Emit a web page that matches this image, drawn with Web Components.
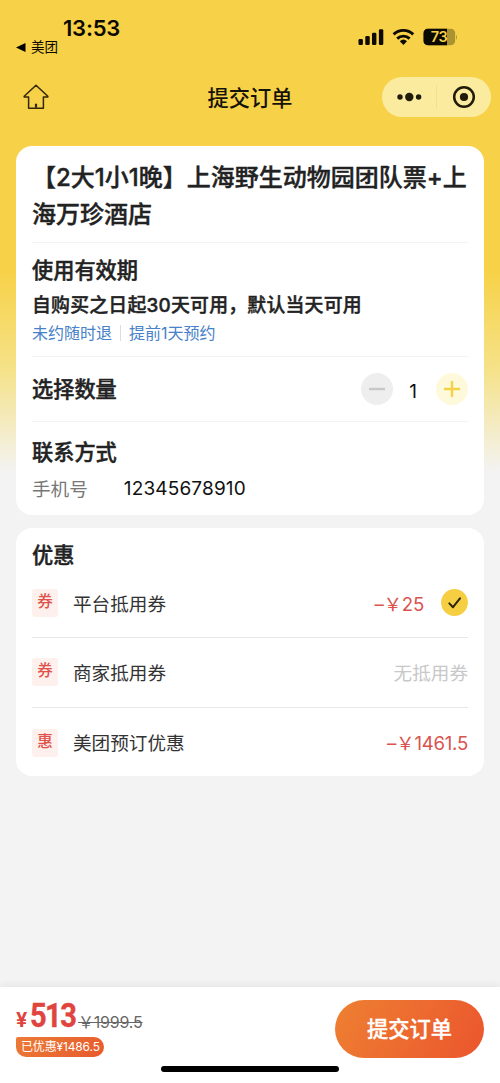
<!DOCTYPE html>
<html lang="zh-CN">
<head>
<meta charset="utf-8">
<title>提交订单</title>
<style>
html,body{margin:0;height:100%}
body{font-family:Inter,"Noto Sans CJK SC",sans-serif;color:#222;overflow:hidden}
</style>
</head>
<body>
<order-page></order-page>
<script>
const define=(name,html)=>{
  const t=document.createElement('template');
  t.innerHTML='<style>*{box-sizing:border-box}:host{display:block;white-space:nowrap}</style>'+html;
  customElements.define(name,class extends HTMLElement{
    constructor(){super();this.attachShadow({mode:'open'}).append(t.content.cloneNode(true));}
  });
};

define('status-bar',`<style>
:host{height:62px;display:flex;justify-content:space-between;padding:0 43px 0 16px;color:#0d0a02}
.left{padding-top:15px}
.time{font-size:22px;font-weight:600;line-height:26px;padding-left:47px;letter-spacing:-.2px}
.back{display:flex;align-items:center;gap:5px;font-size:13.5px;line-height:13px;font-weight:400}
.right{padding-top:28px}
svg{display:block}
</style>
<div class="left"><div class="time">13:53</div>
<div class="back"><svg width="10" height="9" viewBox="0 0 10 9"><path d="M0 4.5 9.5 0v9z"/></svg><span>美团</span></div></div>
<div class="right"><svg width="100" height="19" viewBox="0 0 100 19">
<g fill="#0d0a02"><rect x="1.5" y="11" width="4.4" height="6" rx="1.3"/><rect x="8.3" y="8" width="4.4" height="9" rx="1.3"/><rect x="15" y="4.7" width="4.4" height="12.3" rx="1.3"/><rect x="21.9" y="1.3" width="4.4" height="15.7" rx="1.3"/></g>
<g fill="none" stroke="#0d0a02" stroke-width="2.9"><path d="M36.6 6.4a14 14 0 0 1 19.6 0"/><path d="M40.2 10.6a9 9 0 0 1 12.4 0"/></g>
<path d="M42.8 13.2a5.4 5.4 0 0 1 7.2 0L46.4 16.9z" fill="#0d0a02"/>
<defs><clipPath id="b"><rect x="66.3" y="0.5" width="32" height="17" rx="5"/></clipPath></defs>
<g clip-path="url(#b)"><rect x="66.3" y="0.5" width="32" height="17" fill="#aa9331"/><rect x="66.3" y="0.5" width="23.7" height="17" fill="#0d0a02"/></g>
<text x="82" y="14.2" font-size="14.5" font-weight="600" text-anchor="middle" letter-spacing="-.4" fill="#f7d147">73</text>
<path d="M99.2 7v4.4a2.4 2.4 0 0 0 0-4.4" fill="#aa9331"/></svg></div>`);

define('nav-bar',`<style>
:host{height:70px;display:grid;grid-template-columns:118px 1fr 118px;align-items:center;padding:0 9px}
.home{padding-left:13px}svg{display:block}
.t{text-align:center;font-size:21.2px;font-weight:500;color:#15120a;padding-bottom:2px}
.cap{height:40px;width:109px;justify-self:end;border-radius:20px;background:#fbeb9f}
</style>
<div class="home"><svg width="28" height="28" viewBox="0 0 28 28" fill="none" stroke="#33270a" stroke-width="1.5" stroke-linejoin="round"><path d="M14 2.2 2.2 13.2v.7H6.6V25.2H21.4V13.9H25.8v-.7z"/><path d="M14 20.7v4" stroke-width="2.2"/></svg></div>
<div class="t">提交订单</div>
<div class="cap"><svg width="109" height="40" viewBox="0 0 109 40" fill="#211b0b"><circle cx="18" cy="20" r="2.7"/><circle cx="27.3" cy="20" r="4.2"/><circle cx="36.6" cy="20" r="2.7"/><rect x="54" y="8" width="1" height="24" fill="#f3df8c"/><circle cx="82" cy="20" r="9.8" fill="none" stroke="#211b0b" stroke-width="2.5"/><circle cx="82" cy="20" r="4.1"/></svg></div>`);

define('white-card',`<style>:host{background:#fff;border-radius:16px;padding:0 16px;margin:0 16px}</style><slot></slot>`);

define('card-section',`<style>:host{border-bottom:1px solid #f3f3f3}:host([last]){border:0}</style><slot></slot>`);

define('section-title',`<style>:host{font-size:21.2px;font-weight:500;-webkit-text-stroke:.45px;line-height:30px}</style><slot></slot>`);

define('qty-stepper',`<style>
:host{display:flex;align-items:center}
svg{display:block}span{width:43px;text-align:center;font-size:19px;line-height:24px;padding:5px 3px 0 0;color:#111}
</style>
<svg width="32" height="32" viewBox="0 0 32 32"><circle cx="16" cy="16" r="16" fill="#eee"/><path d="M8 16H24" stroke="#c8c8c8" stroke-width="2.4"/></svg>
<span><slot></slot></span>
<svg width="32" height="32" viewBox="0 0 32 32"><circle cx="16" cy="16" r="16" fill="#fef9db"/><path d="M8 16H24M16 8V24" stroke="#f5d147" stroke-width="2.4"/></svg>`);

define('coupon-row',`<style>
:host{height:70px;display:flex;align-items:center;border-bottom:1px solid #e8e8e8;font-size:18.6px;color:#333}
:host([last]){border:0}
.tag{width:26px;height:28px;border-radius:3px;background:#fdf0ed;color:#e0524a;font-size:15.5px;font-weight:500;line-height:26px;text-align:center;margin:0 15px 1px 0}
.name{flex:1;padding-bottom:3px}
::slotted(.red),::slotted(.none){padding-bottom:3px}
</style><div class="tag"><slot name="tag"></slot></div><div class="name"><slot></slot></div><slot name="value"></slot>`);

define('check-mark',`<style>:host{margin-left:17px;padding-bottom:2px}svg{display:block}</style>
<svg width="27" height="27" viewBox="0 0 27 27"><circle cx="13.5" cy="13.5" r="13.4" fill="#f5ce42"/><path d="M8.3 14.4l3.7 3.8L19 9.3" fill="none" stroke="#2a230c" stroke-width="2" stroke-linecap="round" stroke-linejoin="round"/></svg>`);

define('pay-bar',`<style>
:host{height:96px;background:#fff;box-shadow:0 -2px 8px rgba(0,0,0,.06);padding:0 16px;display:grid;grid-template-rows:78px 18px}
.main{display:flex;justify-content:space-between}
.l{padding-top:10px}
.p{display:flex;align-items:baseline;height:40px;line-height:36px;color:#e0443e;font-weight:700}
.y{font-size:20px;width:14px;font-weight:700}
.n{font:700 33px/38px Roboto,sans-serif;letter-spacing:-1.8px;-webkit-text-stroke:.4px;width:47px;transform:scaleX(.88);transform-origin:left}
s{font-size:16px;color:#666;font-weight:400;letter-spacing:-.2px;margin-left:1px;position:relative;top:1px}
.saved{display:block;height:20px;line-height:19px;padding:0 5px;border-radius:2px 10px 10px 10px;color:#fff;font-size:12px;letter-spacing:-.15px;background:linear-gradient(135deg,#eb7b35,#e85a2d);width:88px}
button{all:unset;box-sizing:border-box;margin-top:13px;width:149px;height:58px;padding-bottom:3px;border-radius:29px;text-align:center;color:#fff;font-size:21.2px;font-weight:500;-webkit-text-stroke:.35px;background:linear-gradient(120deg,#ee8032,#eb552d)}
.home{justify-self:center;width:178px;height:6px;border-radius:3px;background:#000;margin-top:1px}
</style>
<div class="main"><div class="l"><div class="p"><span class="y">¥</span><span class="n">513</span><s>￥1999.5</s></div><div class="saved">已优惠¥1486.5</div></div><button>提交订单</button></div><div class="home"></div>`);

define('order-page',`<style>
:host{height:1083px;display:flex;flex-direction:column;background:linear-gradient(#f7d147 0,#f7d147 270px,#f5e289 370px,#f3f3f3 472px)}
.title{font-size:24px;font-weight:500;-webkit-text-stroke:.4px;line-height:37px;padding-top:13px;height:96px;white-space:normal}
.valid{height:113px;padding-top:12px}
.rule{font-size:18.9px;letter-spacing:.2px;font-weight:500;-webkit-text-stroke:.4px;line-height:30px;padding-top:6px}
.links{display:flex;align-items:center;color:#4681c9;font-size:16px;line-height:26px;margin-top:-1px}
.links i{width:1px;height:16px;background:#ddd;margin:0 8px}
.qty{height:64px;display:flex;align-items:center;justify-content:space-between}
.contact{height:93px;padding-top:15px}
.phone{display:flex;font-size:18.6px;line-height:30px;padding-top:7px;color:#777}
.phone b{font-weight:400;color:#111;font-size:19px;margin-left:36px;letter-spacing:.15px}
.gap{height:13px}
.coupons{height:248px;padding-top:12px}
.coupons coupon-row:first-of-type{height:68px}
.red{color:#d9534f;font-size:18.6px;letter-spacing:-.25px}.none{color:#c8c8c8}
.fill{flex:1}
</style>
<status-bar></status-bar><nav-bar></nav-bar><div style="height:14px"></div>
<white-card>
<card-section><div class="title">【2大1小1晚】上海野生动物园团队票+上海万珍酒店</div></card-section>
<card-section><div class="valid"><section-title>使用有效期</section-title><div class="rule">自购买之日起30天可用，默认当天可用</div><div class="links"><span>未约随时退</span><i></i><span>提前1天预约</span></div></div></card-section>
<card-section><div class="qty"><section-title>选择数量</section-title><qty-stepper>1</qty-stepper></div></card-section>
<card-section last><div class="contact"><section-title>联系方式</section-title><div class="phone"><span>手机号</span><b>12345678910</b></div></div></card-section>
</white-card>
<div class="gap"></div>
<white-card><div class="coupons"><section-title>优惠</section-title>
<coupon-row><span slot="tag">券</span>平台抵用券<span slot="value" class="red">–￥25</span><check-mark slot="value"></check-mark></coupon-row>
<coupon-row><span slot="tag">券</span>商家抵用券<span slot="value" class="none">无抵用券</span></coupon-row>
<coupon-row last><span slot="tag">惠</span>美团预订优惠<span slot="value" class="red">–￥1461.5</span></coupon-row>
</div></white-card>
<div class="fill"></div><pay-bar></pay-bar>`);
</script>
</body>
</html>
